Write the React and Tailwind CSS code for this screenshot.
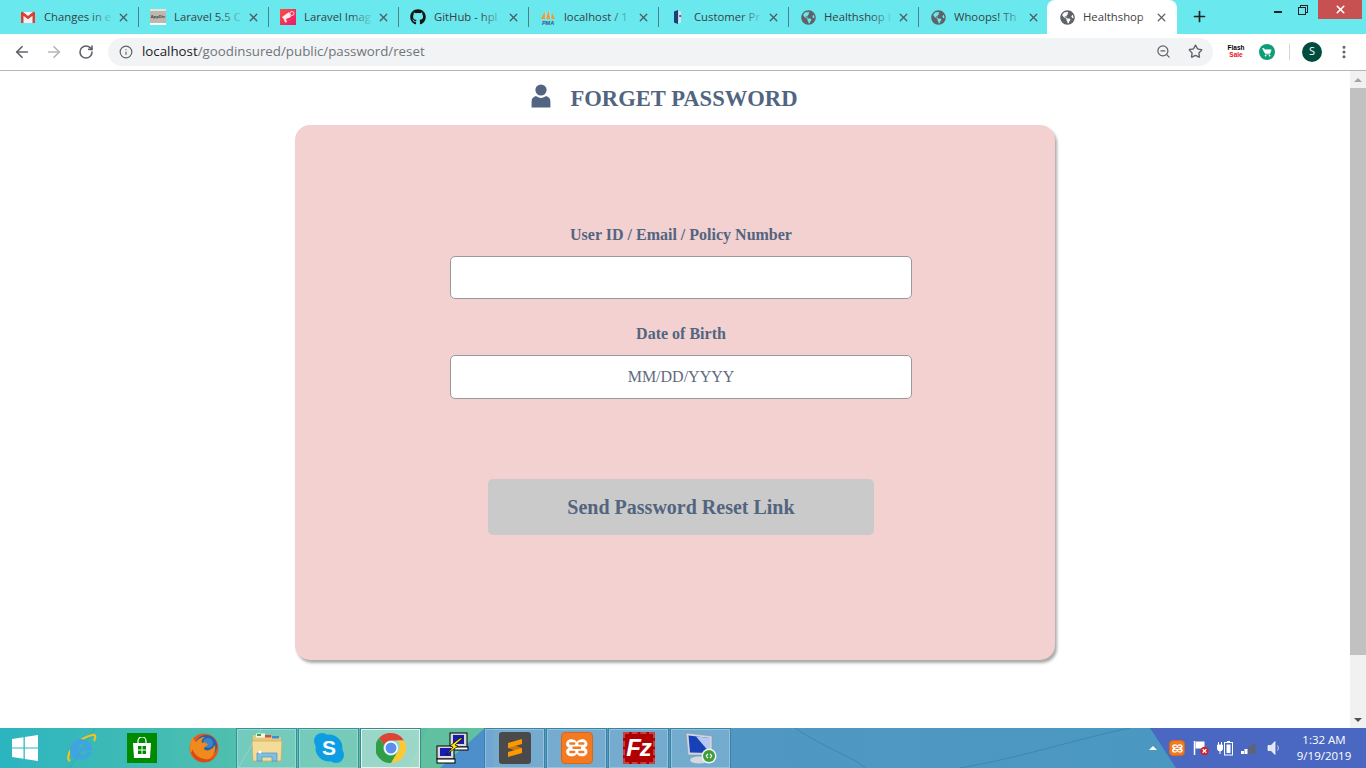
import React from "react";
import { ArrowLeft, ArrowRight, Info, MoreVertical, Plus, RotateCw, Star, X, ZoomOut } from "lucide-react";
import { FaGithub, FaGlobeAmericas } from "react-icons/fa";

const GmailIcon = () => (
    <svg width="16" height="16" viewBox="0 0 16 16">
        <rect x="1" y="3" width="14" height="11" fill="#f1f1f1" />
        <path d="M1 3.5v10.5h2.5V6.8L8 10.2l4.5-3.4V14H15V3.5L13.6 2.6 8 7 2.4 2.6z" fill="#d93f33" />
    </svg>
);

const AppDivIcon = () => (
    <div className="w-4 h-4 flex flex-col">
        <div className="h-[2px] bg-[#e8e4dc]" />
        <div className="flex-1 bg-[#bdb8ae] text-[4px] leading-[11px] font-bold text-center text-[#444] overflow-hidden">AppDiv</div>
        <div className="h-[2px] bg-white" />
    </div>
);

const LaravelImageIcon = () => (
    <svg width="16" height="16" viewBox="0 0 16 16">
        <defs>
            <linearGradient id="lvimg" x1="0" y1="0" x2="1" y2="1">
                <stop offset="0" stopColor="#f8513f" />
                <stop offset="1" stopColor="#ec1770" />
            </linearGradient>
        </defs>
        <rect width="16" height="16" fill="url(#lvimg)" />
        <path d="M2 8l7-5 2 5-5 2 1 3-2 .5-1-3z" fill="#fff" opacity=".9" />
        <circle cx="12" cy="4.5" r="2" fill="none" stroke="#fff" strokeWidth=".8" />
    </svg>
);

const PmaIcon = () => (
    <svg width="16" height="16" viewBox="0 0 16 16">
        <path d="M1 10L5 2v8zM6 10l3-9 1 9zM11 10l1-6 3 6z" fill="#f29a2e" />
        <path d="M5 2l1 8M9 1l2 9" stroke="#d8d8e8" strokeWidth=".6" />
        <text x="8" y="15.5" textAnchor="middle" fontSize="5.5" fontWeight="700" fontStyle="italic" fill="#3e4f86" fontFamily="Liberation Sans, sans-serif">PMA</text>
    </svg>
);

const CustomerIcon = () => (
    <svg width="16" height="16" viewBox="0 0 16 16">
        <path d="M4 2.5L8 1v14l-4-1.5z" fill="#1d3f78" />
        <path d="M8.5 1.5L11 2.5v11l-2.5 1z" fill="#d6e2f2" />
        <rect x="9.2" y="6" width="2" height="2" fill="#d8383c" />
    </svg>
);

const GlobeIcon = () => <FaGlobeAmericas className="text-[#5f6368]" size={15} />;

const tabs = [
    { title: "Changes in e", icon: <GmailIcon /> },
    { title: "Laravel 5.5 C", icon: <AppDivIcon /> },
    { title: "Laravel Imag", icon: <LaravelImageIcon /> },
    { title: "GitHub - hpl", icon: <FaGithub className="text-[#161514]" size={16} /> },
    { title: "localhost / 1", icon: <PmaIcon /> },
    { title: "Customer Pr", icon: <CustomerIcon /> },
    { title: "Healthshop I", icon: <GlobeIcon /> },
    { title: "Whoops! Th", icon: <GlobeIcon /> },
];

const Tab = ({ title, icon, last }) => (
    <div className="relative w-[130px] h-[34px] shrink-0 flex items-center pl-3 pr-[8px]">
        <div className="w-4 h-4 shrink-0 flex items-center justify-center">{icon}</div>
        <div className="relative ml-2 flex-1 overflow-hidden whitespace-nowrap text-[11.3px] text-[#3c4043]">
            {title}
            <div className="absolute inset-y-0 right-0 w-6 bg-gradient-to-r from-transparent to-[#69e8ee]" />
        </div>
        <X className="ml-[3px] text-[#4c5a60] shrink-0" size={13} strokeWidth={2.4} />
        {!last && <div className="absolute -right-px top-[7px] h-5 w-px bg-[#4f7f84]" />}
    </div>
);

const WindowControls = () => (
    <div className="ml-auto flex items-start h-5">
        <div className="w-2 h-[2px] mt-[11px] mr-[16px] bg-[#222]" />
        <div className="relative w-[10px] h-[10px] mt-[5px] mr-[10px]">
            <div className="absolute top-0 right-0 w-2 h-2 border border-[#222]" />
            <div className="absolute bottom-0 left-0 w-2 h-2 border border-[#222] bg-[#69e8ee]" />
        </div>
        <div className="w-11 h-[19px] mr-1 bg-[#c75050] flex items-center justify-center">
            <X className="text-white" size={13} strokeWidth={3} />
        </div>
    </div>
);

const TabStrip = () => (
    <div className="flex h-[34px] shrink-0 bg-[#69e8ee] pl-2">
        {tabs.map((tab, i) => (
            <Tab key={i} title={tab.title} icon={tab.icon} last={i === tabs.length - 1} />
        ))}
        <div className="w-[130px] h-[34px] shrink-0 -ml-px bg-white rounded-t-lg flex items-center pl-3 pr-[9px]">
            <div className="w-4 h-4 flex items-center justify-center"><GlobeIcon /></div>
            <div className="relative ml-2 flex-1 overflow-hidden whitespace-nowrap text-[11.3px] text-[#3c4043]">
                Healthshop
                <div className="absolute inset-y-0 right-0 w-3 bg-gradient-to-r from-transparent to-white" />
            </div>
            <X className="ml-[3px] text-[#5f6368]" size={13} strokeWidth={2.4} />
        </div>
        <Plus className="ml-[14px] mt-[8px] text-[#222]" size={17} strokeWidth={2.4} />
        <WindowControls />
    </div>
);

const Toolbar = () => (
    <div className="flex items-center h-[37px] shrink-0 bg-white border-b border-[#b5b5b5] pl-[13px] pr-3 pb-px">
        <ArrowLeft className="text-[#5f6368]" size={18} strokeWidth={2.3} />
        <ArrowRight className="ml-[14px] text-[#b4b6b9]" size={18} strokeWidth={2.3} />
        <RotateCw className="ml-[15px] text-[#5f6368]" size={16} strokeWidth={2.4} />
        <div className="ml-[14px] flex items-center w-[1105px] h-7 rounded-full bg-[#f1f3f4] pl-[11px] pr-[10px]">
            <Info className="text-[#5f6368]" size={14} strokeWidth={2} />
            <div className="ml-[9px] pt-px text-[13.3px] text-[#70757a] whitespace-nowrap">
                <span className="text-[#202124]">localhost</span>/goodinsured/public/password/reset
            </div>
            <ZoomOut className="ml-auto text-[#5f6368]" size={15} strokeWidth={2} />
            <Star className="ml-[17px] text-[#5f6368]" size={15} strokeWidth={2.2} />
        </div>
        <div className="ml-[13px] w-5 text-center font-bold text-[6.5px] leading-[6.5px] font-['Liberation_Sans',sans-serif]">
            <div className="text-black">Flash</div>
            <div className="text-[#e8101a]">Sale</div>
        </div>
        <div className="ml-[13px] w-4 h-4 rounded-full bg-[#0f9d78] flex items-center justify-center">
            <svg width="10" height="10" viewBox="0 0 10 10">
                <path d="M.5 1.5h1.6l.5 1.2h6.6L8 6.5H3.2zM3.5 7.2H8" fill="#fff" stroke="#fff" strokeWidth=".5" />
                <circle cx="3.6" cy="8.6" r=".9" fill="#fff" />
                <circle cx="7.6" cy="8.6" r=".9" fill="#fff" />
            </svg>
        </div>
        <div className="ml-[14px] w-px h-4 bg-[#d5d7d9]" />
        <div className="ml-[12px] w-5 h-5 rounded-full bg-[#004d40] text-white text-[11px] flex items-center justify-center">S</div>
        <MoreVertical className="ml-[14px] text-[#5f6368]" size={16} strokeWidth={2.6} />
    </div>
);

const UserIcon = () => (
    <svg width="20" height="24" viewBox="0 0 20 24" className="text-[#526580] -mt-[6px]">
        <circle cx="10" cy="6" r="5.6" fill="currentColor" />
        <path d="M0.6 23.5v-6.2c0-3 2-4.6 4.4-5.2 1.4 1.2 3.2 1.8 5 1.8s3.6-.6 5-1.8c2.4.6 4.400 2.200 4.400 5.200v6.200z" fill="currentColor" />
    </svg>
);

const Field = ({ label, placeholder, top, height }) => (
    <div className={top}>
        <label className="block text-center font-bold text-[16px] leading-[20px] text-[#526580]">{label}</label>
        <input
            type="text"
            placeholder={placeholder}
            className={`block w-full ${height} mt-[11px] bg-white border border-[#999] rounded-[5px] text-center text-[16px] text-[#526580] placeholder:text-[#5f6b80] outline-none`}
        />
    </div>
);

const Scrollbar = () => (
    <div className="w-4 shrink-0 bg-[#f1f1f1] flex flex-col items-center">
        <div className="h-[17px] flex items-center justify-center">
            <div className="border-x-[4px] border-x-transparent border-b-[4px] border-b-[#a3a3a3]" />
        </div>
        <div className="w-full h-[567px] bg-[#c1c1c1]" />
        <div className="mt-auto h-[17px] flex items-center justify-center">
            <div className="border-x-[4px] border-x-transparent border-t-[4px] border-t-[#505050]" />
        </div>
    </div>
);

const Page = () => (
    <div className="flex flex-1 min-h-0 bg-white font-['Liberation_Serif',serif]">
        <div className="flex-1 min-w-0 overflow-hidden">
            <div className="flex items-center justify-center h-[54px] pt-[2px] pr-[21px]">
                <UserIcon />
                <h1 className="ml-[19px] text-[22.6px] font-bold text-[#526580]">FORGET PASSWORD</h1>
            </div>
            <div className="w-[760px] h-[535px] mx-auto pt-[100px] pl-[155px] bg-[#f3d1d1] rounded-[15px] shadow-[2px_3px_3px_#aaa]">
                <div className="w-[462px]">
                    <Field label="User ID / Email / Policy Number" height="h-[43px]" />
                    <Field label="Date of Birth" placeholder="MM/DD/YYYY" top="mt-[25px]" height="h-[44px]" />
                    <button className="block w-[386px] h-[56px] mx-auto mt-[80px] bg-[#cacaca] rounded-[5px] font-bold text-[20px] text-[#526580]">
                        Send Password Reset Link
                    </button>
                </div>
            </div>
        </div>
        <Scrollbar />
    </div>
);

const WindowsLogo = () => (
    <svg width="26" height="26" viewBox="0 0 26 26">
        <path d="M0 4l11.5-1.7V12.4H0zM12.8 2.1L26 0v12.4H12.8zM0 13.6h11.5v10.2L0 22zM12.8 13.6H26V26l-13.2-2z" fill="#fff" />
    </svg>
);

const IeIcon = () => (
    <svg width="32" height="32" viewBox="0 0 32 32">
        <path d="M5 29C-1 26 8 8 27 3c4-1 4 2 2 6" fill="none" stroke="#f0c419" strokeWidth="2.2" />
        <path d="M5 19a11 11 0 0 1 22-2v2H13c1 5 8 5 10 1h4c-3 10-22 10-22-1zM13 15h8c-1-4-7-4-8 0z" fill="#3fa4e0" fillRule="evenodd" />
    </svg>
);

const StoreIcon = () => (
    <div className="w-[30px] h-[30px] bg-[#008a00] flex items-center justify-center">
        <svg width="20" height="22" viewBox="0 0 20 22">
            <path d="M6 6V4a4 4 0 0 1 8 0v2" fill="none" stroke="#fff" strokeWidth="1.2" />
            <path d="M1 6h18l-1 15H2z" fill="#fff" />
            <path d="M6 9h3.5v3.5H6zM10.5 9H14v3.5h-3.5zM6 13.5h3.5V17H6zM10.5 13.5H14V17h-3.5z" fill="#008a00" />
        </svg>
    </div>
);

const FirefoxIcon = () => (
    <svg width="30" height="30" viewBox="0 0 30 30">
        <circle cx="15" cy="15" r="14.5" fill="#e25a1c" />
        <circle cx="17" cy="13" r="11" fill="#2a5fa8" />
        <circle cx="19" cy="10" r="5" fill="#3f84c8" />
        <path d="M4 3c0 3 1 5 3 6 2-3 5-5 9-5-3 2-4 4-3 6 3-1 5 0 6 2-2 1-4 2-4 4 3 3 8 1 11-4 1 5-1 11-6 14-5 3-12 2-16-2C0 20 0 10 4 3z" fill="#f08a1d" />
        <path d="M2 20c2 5 7 9 13 9 4 0 7-1 10-4-6 3-14 1-18-3-2-2-3-4-3-6z" fill="#d8481a" />
    </svg>
);

const ExplorerIcon = () => (
    <svg width="32" height="32" viewBox="0 0 32 32">
        <path d="M2 3h10l2 2h16v6H2z" fill="#e8c878" />
        <rect x="5" y="1.5" width="9" height="4" fill="#f5f5ee" />
        <rect x="6" y="2" width="4" height="2" fill="#3fa34d" />
        <rect x="14" y="3" width="6" height="2.5" fill="#e0493a" />
        <rect x="21" y="4" width="7" height="2.5" fill="#3b8fd9" />
        <path d="M1 9h30l-1 20H2z" fill="#f3dc9a" stroke="#caa75a" strokeWidth=".7" />
        <path d="M6 21h20v8h-5v-4H11v4H6z" fill="#7cc0e4" stroke="#4f94bc" strokeWidth=".7" />
        <circle cx="9" cy="20" r="1.5" fill="#fff" />
    </svg>
);

const SkypeIcon = () => (
    <svg width="32" height="32" viewBox="0 0 32 32">
        <circle cx="9" cy="9" r="8" fill="#0d9de3" />
        <circle cx="23" cy="23" r="8" fill="#0d9de3" />
        <circle cx="16" cy="16" r="13.5" fill="#0d9de3" />
        <text x="16" y="23" textAnchor="middle" fontSize="21" fontWeight="700" fill="#fff" fontFamily="Liberation Sans, sans-serif">S</text>
    </svg>
);

const ChromeIcon = () => (
    <svg width="30" height="30" viewBox="0 0 30 30">
        <path d="M15 0a15 15 0 0 1 13 7.5H15a7.5 7.5 0 0 0-7 4.5L3 5a15 15 0 0 1 12-5z" fill="#db4437" />
        <path d="M28 7.5A15 15 0 0 1 15 30l6.5-11.2A7.5 7.5 0 0 0 21.5 7.5z" fill="#fcc934" />
        <path d="M3 5l5 7a7.5 7.5 0 0 0 7 10.5 7.5 7.5 0 0 0 6.5-3.7L15 30A15 15 0 0 1 3 5z" fill="#2f9e44" />
        <circle cx="15" cy="15" r="7" fill="#fff" />
        <circle cx="15" cy="15" r="5.5" fill="#5a8ff0" />
    </svg>
);

const PuttyIcon = () => (
    <svg width="34" height="34" viewBox="0 0 34 34">
        <rect x="14" y="2" width="17" height="14" fill="#d8d8d8" stroke="#000" />
        <rect x="17" y="4" width="11" height="9" fill="#1a1ab0" />
        <rect x="14" y="16" width="18" height="3" fill="#fff" stroke="#000" />
        <rect x="1" y="15" width="17" height="13" fill="#d8d8d8" stroke="#000" />
        <rect x="4" y="17" width="11" height="8" fill="#1a1ab0" />
        <rect x="1" y="28" width="18" height="4" fill="#fff" stroke="#000" />
        <path d="M24 7l-10 8 3 1-7 8 12-9-3-1 8-7z" fill="#ffe800" stroke="#000" strokeWidth=".7" />
    </svg>
);

const SublimeIcon = () => (
    <div className="w-8 h-8 rounded-[3px] bg-[#4a4a4a] flex items-center justify-center">
        <svg width="16" height="20" viewBox="0 0 16 20">
            <path d="M1 5v5l14 5v-5z" fill="#c97a08" />
            <path d="M15 1v5L1 10V5zM15 10v5L1 19v-5z" fill="#ff9800" />
        </svg>
    </div>
);

const XamppIcon = ({ size = 32 }) => (
    <div className="rounded-[4px] bg-[#f37a20] border border-[#d9651a] flex items-center justify-center" style={{ width: size, height: size }}>
        <svg width={size * 0.8} height={size * 0.8} viewBox="0 0 24 24">
            <path d="M7 4C4 4 2 6 2 8.5 2 10 3 11.2 4.5 12 3 12.8 2 14 2 15.5 2 18 4 20 7 20c2 0 4-.8 5-2.5 1 1.7 3 2.5 5 2.5 3 0 5-2 5-4.5 0-1.500-1-2.700-2.500-3.500C21 11.200 22 10 22 8.500 22 6 20 4 17 4c-2 0-4 .8-5 2.500C11 4.800 9 4 7 4z" fill="#fff" />
            <path d="M6 8h3.5M14.500 8H18M6 16h3.500M14.500 16H18M9 12h6" stroke="#f37a20" strokeWidth="2.4" strokeLinecap="round" />
        </svg>
    </div>
);

const FilezillaIcon = () => (
    <div className="w-8 h-8 bg-[#b00000] border-2 border-dashed border-[#e8e0e0]/30 flex items-center justify-center">
        <span className="text-white text-[24px] leading-none font-bold italic font-['Liberation_Sans',sans-serif] tracking-[-1px]">Fz</span>
    </div>
);

const RemoteIcon = () => (
    <svg width="32" height="34" viewBox="0 0 32 34">
        <path d="M1 2l26 3v19L3 24z" fill="#cfd6de" stroke="#8a95a2" strokeWidth=".6" />
        <path d="M3.5 4.5L25 7v15L5 21.5z" fill="#1840b8" />
        <path d="M11 5.5L25 7v15z" fill="#c8d8f8" opacity=".9" />
        <ellipse cx="14" cy="29" rx="9" ry="3.5" fill="#d5d9de" />
        <circle cx="24" cy="25" r="7.5" fill="#f0f4f0" />
        <circle cx="24" cy="25" r="6" fill="#3f9d3a" />
        <path d="M21 25l2-2M21 25l2 2M27 25l-2-2M27 25l-2 2" stroke="#fff" strokeWidth="1.1" />
    </svg>
);

// button shown behind pinned apps that are running
const TaskButton = ({ children, active, className }) => (
    <div className={`w-[59px] h-[39px] flex items-center justify-center border ${active ? "bg-white/40 border-white/70 outline outline-[#3d8a88]" : "bg-white/20 border-white/25 outline outline-[#2f7a98]/70"} ${className || ""}`}>
        {children}
    </div>
);

const TrayIcons = () => (
    <div className="flex items-center h-full">
        <div className="border-x-[4px] border-x-transparent border-b-[4px] border-b-white" />
        <div className="ml-[12px]"><XamppIcon size={16} /></div>
        <svg className="ml-2" width="16" height="16" viewBox="0 0 16 16">
            <path d="M1.5 1v14" stroke="#fff" strokeWidth="1.5" />
            <path d="M2.5 1.5h9v7h-9z" fill="#fff" />
            <circle cx="11.5" cy="11" r="4.2" fill="#d3222a" />
            <path d="M9.7 9.2l3.6 3.6M13.3 9.2l-3.6 3.6" stroke="#fff" strokeWidth="1.3" />
        </svg>
        <svg className="ml-2" width="16" height="16" viewBox="0 0 16 16">
            <path d="M1.5 2v3M4.5 2v3M.5 5h5v3.5a2.5 2.5 0 0 1-5 0zM3 11v3" stroke="#fff" fill="#fff" />
            <rect x="7.5" y="2.5" width="8" height="12.5" fill="none" stroke="#fff" />
            <rect x="9.5" y="4.5" width="4" height="8.5" fill="#fff" />
            <rect x="10" y="1" width="3" height="1.5" fill="#fff" />
        </svg>
        <svg className="ml-2" width="16" height="14" viewBox="0 0 16 14">
            <rect x="0" y="10" width="3" height="3" fill="#fff" />
            <rect x="3.5" y="8" width="3" height="5" fill="#fff" />
            <rect x="7" y="5.5" width="3" height="7.5" fill="#5e6472" />
            <rect x="10.5" y="3" width="4" height="10" fill="#5e6472" />
        </svg>
        <svg className="ml-[10px]" width="14" height="16" viewBox="0 0 14 16">
            <path d="M1 5.5h3L8 1.5v13l-4-4H1z" fill="#dfe6ef" stroke="#fff" strokeWidth=".7" />
            <path d="M10.5 5.5a4 4 0 0 1 0 5" fill="none" stroke="#c8d4e6" />
        </svg>
        <div className="w-[84px] ml-[1px] text-white text-center text-[11.5px] leading-[16px]">
            <div>1:32 AM</div>
            <div>9/19/2019</div>
        </div>
    </div>
);

const Taskbar = () => (
    <div className="relative flex items-center h-10 shrink-0 overflow-hidden font-['Open_Sans',sans-serif]">
        <svg className="absolute inset-0" width="1366" height="40" viewBox="0 0 1366 40" preserveAspectRatio="none">
            <defs>
                <linearGradient id="wall" x1="0" y1="0" x2="1" y2="0">
                    <stop offset="0" stopColor="#2bb5c0" />
                    <stop offset=".17" stopColor="#4fbfae" />
                    <stop offset=".33" stopColor="#5cbca2" />
                    <stop offset=".36" stopColor="#5497c4" />
                    <stop offset=".85" stopColor="#4a98c2" />
                </linearGradient>
            </defs>
            <rect width="1366" height="40" fill="url(#wall)" />
            <path d="M440 40L488 0h-60l-20 40z" fill="#61c0a0" />
            <path d="M440 40l45-40h8v40z" fill="#4d8fca" />
            <path d="M1150 0h216v40h-190z" fill="#4a67c1" />
            <path d="M238 40l24-40" stroke="#7dc8b8" strokeWidth="1" />
            <path d="M70 40l25-40" stroke="#3aa8b4" strokeWidth="1" />
            <path d="M795 0c30 20 60 30 70 40" stroke="#3f86b4" fill="none" />
            <path d="M960 40c60-10 120-30 170-40" stroke="#3f86b4" fill="none" />
        </svg>
        <div className="relative flex items-center w-full h-full">
            <div className="ml-3 w-[26px]"><WindowsLogo /></div>
            <div className="ml-[27px] w-8"><IeIcon /></div>
            <div className="ml-[30px]"><StoreIcon /></div>
            <div className="ml-8"><FirefoxIcon /></div>
            <TaskButton className="ml-[18px]"><ExplorerIcon /></TaskButton>
            <TaskButton className="ml-[3px]"><SkypeIcon /></TaskButton>
            <TaskButton className="ml-[3px]" active><ChromeIcon /></TaskButton>
            <div className="ml-[16px] w-[34px]"><PuttyIcon /></div>
            <TaskButton className="ml-[15px]"><SublimeIcon /></TaskButton>
            <TaskButton className="ml-[3px]"><XamppIcon /></TaskButton>
            <TaskButton className="ml-[3px]"><FilezillaIcon /></TaskButton>
            <TaskButton className="ml-[3px]"><RemoteIcon /></TaskButton>
            <div className="ml-auto"><TrayIcons /></div>
        </div>
    </div>
);

const App = () => {
    return (
        <div className="flex flex-col w-[1366px] h-[768px] overflow-hidden font-['Open_Sans',sans-serif]">
            <TabStrip />
            <Toolbar />
            <Page />
            <Taskbar />
        </div>
    );
};

export default App;
